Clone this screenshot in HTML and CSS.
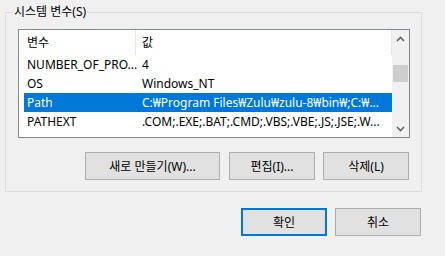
FILE: index.html
```html
<!doctype html>
<html lang="ko">
    <head>
        <meta charset="UTF-8" />
        <meta name="viewport" content="width=device-width, initial-scale=1.0" />
        <title>시스템 변수</title>
        <link rel="stylesheet" href="styles.css">
    </head>
    <body>
        <div class="dialog">
            <fieldset class="group">
                <legend>시스템 변수(S)</legend>
                <div class="listbox">
                    <div class="list">
                        <div class="list-head">
                            <span class="head-name">변수</span>
                            <span class="head-value">값</span>
                        </div>
                        <div class="row">
                            <span class="cell-name">NUMBER_OF_PRO...</span>
                            <span class="cell-value">4</span>
                        </div>
                        <div class="row">
                            <span class="cell-name">OS</span>
                            <span class="cell-value">Windows_NT</span>
                        </div>
                        <div class="row selected">
                            <span class="cell-name">Path</span>
                            <span class="cell-value">C:₩Program Files₩Zulu₩zulu-8₩bin₩;C:₩...</span>
                        </div>
                        <div class="row">
                            <span class="cell-name">PATHEXT</span>
                            <span class="cell-value">.COM;.EXE;.BAT;.CMD;.VBS;.VBE;.JS;.JSE;.W...</span>
                        </div>
                    </div>
                    <div class="scrollbar">
                        <div class="arrow">
                            <svg width="9" height="6" viewBox="0 0 9 6"><path d="M1 5 L4.5 1.5 L8 5" fill="none" stroke="#606060" stroke-width="1.6"/></svg>
                        </div>
                        <div class="track">
                            <div class="thumb"></div>
                        </div>
                        <div class="arrow">
                            <svg width="9" height="6" viewBox="0 0 9 6"><path d="M1 1 L4.5 4.5 L8 1" fill="none" stroke="#606060" stroke-width="1.6"/></svg>
                        </div>
                    </div>
                </div>
                <div class="actions">
                    <button class="btn btn-wide" type="button">새로 만들기(W)...</button>
                    <button class="btn" type="button">편집(I)...</button>
                    <button class="btn" type="button">삭제(L)</button>
                </div>
            </fieldset>
            <div class="footer">
                <button class="btn btn-default" type="button">확인</button>
                <button class="btn" type="button">취소</button>
            </div>
        </div>
    </body>
</html>
```

FILE: styles.css
```css
body {
    margin: 0;
    background: #f0f0f0;
    font-family: "Noto Sans", "Noto Sans CJK KR", sans-serif;
    font-size: 12px;
    color: #000;
}
.dialog {
    width: 445px;
    height: 256px;
    overflow: hidden;
}
.group {
    box-sizing: border-box;
    width: 417px;
    margin: 4px 0 0 5px;
    padding: 9px 11px 11px 12px;
    border: 1px solid #dcdcdc;
}
.group legend {
    margin-left: -5px;
    padding: 0 1px;
    line-height: 16px;
}
.listbox {
    box-sizing: border-box;
    width: 392px;
    height: 109px;
    border: 1px solid #828790;
    background: #fff;
    display: flex;
}
.list {
    flex: 1;
    overflow: hidden;
}
.list-head {
    display: flex;
    height: 25px;
    line-height: 25px;
}
.head-name {
    box-sizing: border-box;
    width: 117px;
    padding-left: 8px;
    border-right: 1px solid #e5e5e5;
}
.head-value {
    flex: 1;
    padding-left: 6px;
    border-right: 1px solid #e5e5e5;
}
.row {
    display: flex;
    height: 19px;
    line-height: 19px;
    margin-left: 5px;
    white-space: nowrap;
}
.row.selected {
    background: #0078d7;
    color: #fff;
}
.cell-name {
    box-sizing: border-box;
    width: 118px;
    padding-left: 3px;
    overflow: hidden;
}
.cell-value {
    flex: 1;
    overflow: hidden;
}
.scrollbar {
    width: 17px;
    background: #f0f0f0;
    display: flex;
    flex-direction: column;
}
.arrow {
    height: 17px;
    display: flex;
    align-items: center;
    justify-content: center;
}
.track {
    flex: 1;
    padding-top: 18px;
}
.thumb {
    width: 15px;
    height: 17px;
    margin-left: 1px;
    background: #cdcdcd;
}
.actions {
    display: flex;
    justify-content: flex-end;
    gap: 8px;
    margin-top: 14px;
    padding-right: 1px;
}
.btn {
    box-sizing: border-box;
    width: 86px;
    height: 28px;
    padding: 0;
    background: #e1e1e1;
    border: 1px solid #adadad;
    font: inherit;
    color: #000;
}
.btn-wide {
    width: 135px;
    margin-right: 1px;
}
.btn-default {
    border: 2px solid #0078d7;
}
.footer {
    display: flex;
    justify-content: flex-end;
    gap: 8px;
    margin-top: 16px;
    padding-right: 24px;
}
```
